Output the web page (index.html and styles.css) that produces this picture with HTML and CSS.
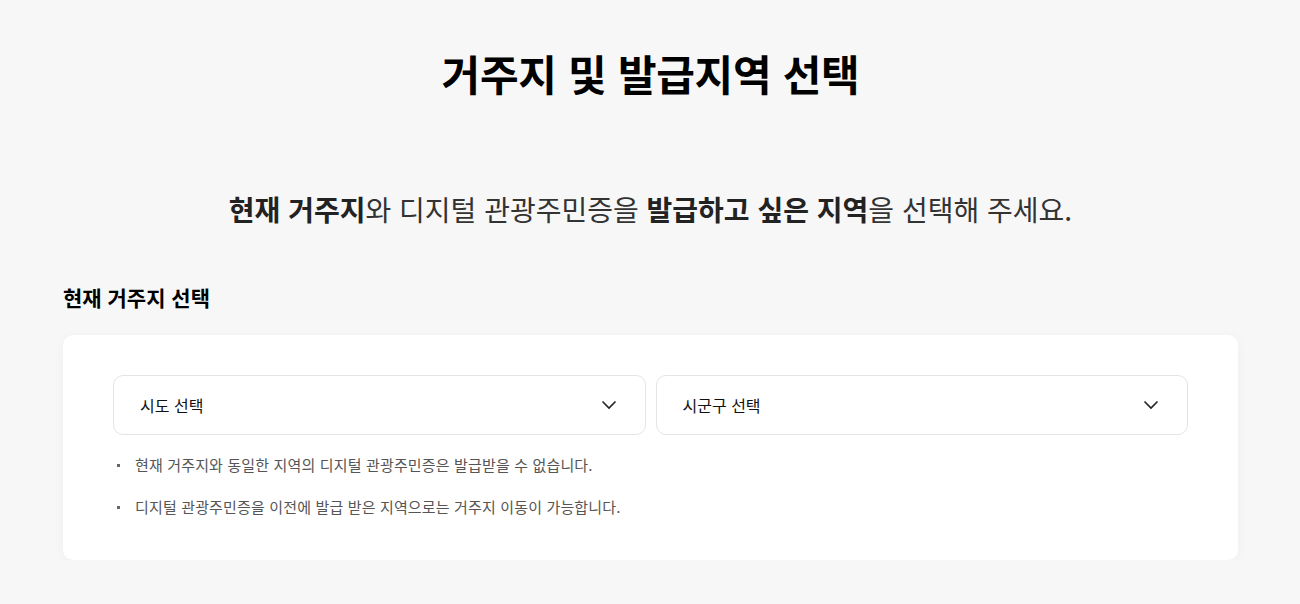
FILE: index.html
```html
<!DOCTYPE html>
<html lang="ko">
<head>
<meta charset="utf-8">
<link rel="stylesheet" href="styles.css">
</head>
<body>
<main class="page">
  <h1 class="title">거주지 및 발급지역 선택</h1>
  <p class="lead"><strong>현재 거주지</strong>와 디지털 관광주민증을 <strong>발급하고 싶은 지역</strong>을 선택해 주세요.</p>
  <h2 class="section-title">현재 거주지 선택</h2>
  <section class="card">
    <div class="selects">
      <div class="select">
        <span>시도 선택</span>
        <svg class="chev" width="16" height="10" viewBox="0 0 16 10"><path d="M1.5 1.5 L8 8 L14.5 1.5" fill="none" stroke="#222" stroke-width="1.6"/></svg>
      </div>
      <div class="select">
        <span>시군구 선택</span>
        <svg class="chev" width="16" height="10" viewBox="0 0 16 10"><path d="M1.5 1.5 L8 8 L14.5 1.5" fill="none" stroke="#222" stroke-width="1.6"/></svg>
      </div>
    </div>
    <ul class="notes">
      <li>현재 거주지와 동일한 지역의 디지털 관광주민증은 발급받을 수 없습니다.</li>
      <li>디지털 관광주민증을 이전에 발급 받은 지역으로는 거주지 이동이 가능합니다.</li>
    </ul>
  </section>
</main>
</body>
</html>
```

FILE: styles.css
```css
html, body {
  margin: 0;
  padding: 0;
}
body {
  background: #f7f7f7;
  font-family: "Noto Sans CJK KR", "Noto Sans", sans-serif;
  color: #111;
}
.page {
  padding: 0 62px 0 63px;
}
.title {
  margin: 0;
  padding-top: 41px;
  text-align: center;
  font-size: 42px;
  font-weight: 700;
  line-height: 64px;
  letter-spacing: -0.3px;
  color: #000;
}
.lead {
  margin: 84px 0 0;
  text-align: center;
  font-size: 28px;
  line-height: 40px;
  font-weight: 400;
  color: #333;
  letter-spacing: 0;
}
.lead strong {
  font-weight: 700;
  color: #222;
}
.section-title {
  margin: 54px 0 0;
  font-size: 21px;
  line-height: 28px;
  font-weight: 700;
  color: #000;
}
.card {
  margin-top: 24px;
  background: #fff;
  border-radius: 10px;
  box-shadow: 0 2px 12px rgba(0,0,0,0.04);
  padding: 40px 50px 42px;
}
.selects {
  display: flex;
  gap: 10px;
}
.select {
  flex: 1;
  height: 60px;
  box-sizing: border-box;
  border: 1px solid #e4e4e4;
  border-radius: 10px;
  display: flex;
  align-items: center;
  justify-content: space-between;
  padding: 0 28px 0 26px;
  font-size: 16px;
  color: #111;
}
.notes {
  list-style: none;
  margin: 19px 0 0;
  padding: 0;
}
.notes li {
  position: relative;
  padding-left: 22px;
  font-size: 15px;
  line-height: 22px;
  letter-spacing: 0.15px;
  color: #555;
  margin-bottom: 20px;
}
.notes li:last-child {
  margin-bottom: 0;
}
.notes li::before {
  content: "";
  position: absolute;
  left: 4px;
  top: 10px;
  width: 3px;
  height: 3px;
  background: #666;
}
```
